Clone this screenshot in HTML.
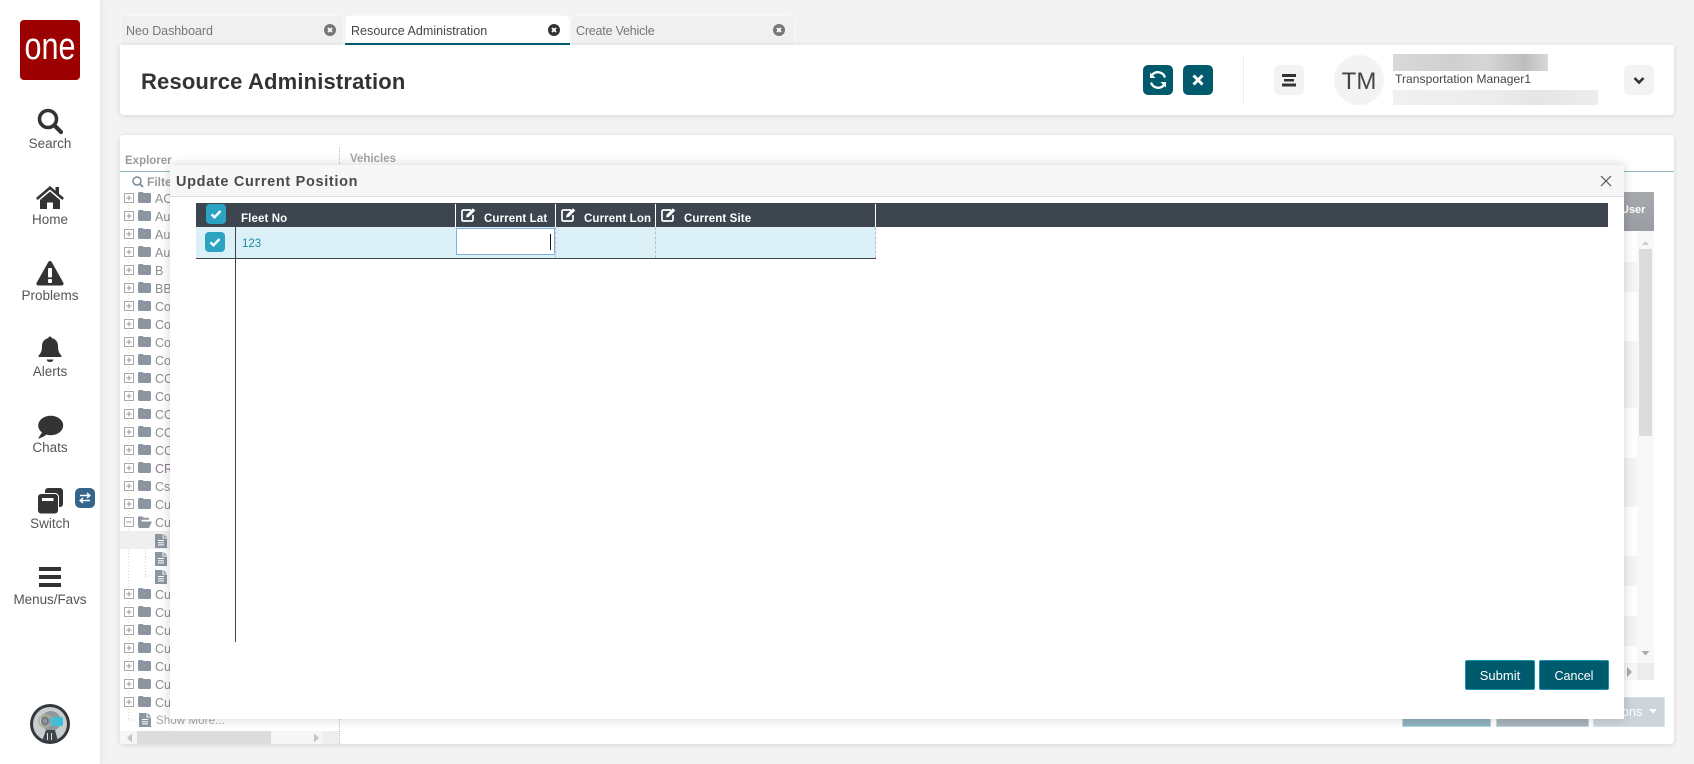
<!DOCTYPE html>
<html lang="en">
<head>
<meta charset="utf-8">
<title>Resource Administration</title>
<style>
html,body{margin:0;padding:0;width:1694px;height:764px;overflow:hidden;background:#f3f3f3;font-family:"Liberation Sans",sans-serif;color:#444}
*{box-sizing:border-box}
.a{position:absolute}
.t{position:absolute;white-space:nowrap;line-height:1}
.nav{position:absolute;left:0;width:100px;text-align:center;font-size:13.5px;color:#555;line-height:1;letter-spacing:0}
.tab{position:absolute;top:15px;height:30px;background:#f0f0f0;border-radius:5px 5px 0 0;border:1px solid #f8f8f8;border-bottom:0}
.tab span{position:absolute;left:6px;top:9px;font-size:12.5px;color:#777;white-space:nowrap;line-height:1;letter-spacing:0}
.x{position:absolute;top:8px;width:12px;height:12px;border-radius:50%;background:#777;color:#fff}
.x svg,.ib svg{display:block}
.ib{position:absolute;top:65px;width:30px;height:30px;border-radius:5px;background:#005a6e}
.gb{position:absolute;top:65px;width:30px;height:30px;border-radius:5px;background:#f3f3f3}
.bbtn{position:absolute;top:660px;width:70px;height:30px;background:#005a6e;border:1px solid #1c93ae;border-radius:2px;color:#fff;font-size:13px;text-align:center;line-height:29px}
.cb{position:absolute;width:20px;height:20px;border-radius:4px;background:#2ba4c4}
.th{position:absolute;top:214px;color:#fff;font-weight:bold;font-size:11.5px;line-height:1;white-space:nowrap;letter-spacing:.12px}
.vs{position:absolute;top:204px;width:1px;height:23px;background:#fff}
.ds{position:absolute;top:227px;width:0;height:31px;border-left:1px dashed #b5c3c9}
</style>
</head>
<body>
<svg width="0" height="0" style="position:absolute">
<defs>
<symbol id="pl" viewBox="0 0 10 10"><rect x=".5" y=".5" width="9" height="9" fill="#fff" stroke="#aaa"/><path d="M2.5 5h5M5 2.5v5" stroke="#999" fill="none"/></symbol>
<symbol id="mi" viewBox="0 0 10 10"><rect x=".5" y=".5" width="9" height="9" fill="#fff" stroke="#aaa"/><path d="M2.5 5h5" stroke="#999" fill="none"/></symbol>
<symbol id="fo" viewBox="0 0 13 11"><path d="M0 1.6C0 .7.6 0 1.4 0h2.8c.7 0 1 .4 1.3 1h6.1c.8 0 1.4.6 1.4 1.4v7.2c0 .8-.6 1.4-1.4 1.4H1.4C.6 11 0 10.400 0 9.600z" fill="#8b96a1"/></symbol>
<symbol id="dc" viewBox="0 0 12 14"><path d="M0 0h7.500v4.500H12V14H0z" fill="#8b96a1"/><path d="M8.500 0L12 3.500H8.500z" fill="#8b96a1"/><path d="M3 6.500h6M3 8.700h6M3 10.900h6" stroke="#fff" stroke-width="1"/></symbol>
<symbol id="chk" viewBox="0 0 20 20"><path d="M5.500 10.300l3 3 6-6.300" fill="none" stroke="#fff" stroke-width="2.400"/></symbol>
<symbol id="ed" viewBox="0 0 15 15"><path d="M10 3H2.500C1.600 3 1 3.600 1 4.500v8C1 13.400 1.600 14 2.500 14h8c.9 0 1.500-.6 1.500-1.500V8" fill="none" stroke="#fff" stroke-width="1.700"/><path d="M5 10.500l.6-2.800L12 1.200l2.300 2.300-6.400 6.400z" fill="#fff"/></symbol>
<symbol id="cx" viewBox="0 0 12 12"><path d="M4 4l4 4M8 4l-4 4" stroke="#fff" stroke-width="1.800"/></symbol>
<linearGradient id="vis" x1="0" x2="1" y1="0" y2="0"><stop offset="0" stop-color="#5fb7c8"/><stop offset="1" stop-color="#2fc0dc"/></linearGradient>
</defs>
</svg>

<!-- sidebar -->
<div class="a" style="left:0;top:0;width:100px;height:764px;background:#fff;box-shadow:2px 0 6px rgba(0,0,0,.06)"></div>
<svg class="a" style="left:20px;top:20px" width="60" height="60"><rect width="60" height="60" rx="4" fill="#9c0000"/><text x="30" y="39" text-anchor="middle" font-family="Liberation Sans" font-size="38" fill="#fff" textLength="51" lengthAdjust="spacingAndGlyphs">one</text></svg>

<svg class="a" style="left:36px;top:107px" width="28" height="28"><circle cx="12" cy="12" r="8.500" fill="none" stroke="#333" stroke-width="3.600"/><path d="M18.500 18.500l6.500 6.500" stroke="#333" stroke-width="4.200" stroke-linecap="round"/></svg>
<div class="nav" style="top:137px">Search</div>

<svg class="a" style="left:35px;top:184px" width="30" height="26"><path d="M15 2L1 14l1.700 2L15 5.500 27.300 16l1.700-2-5-4.300V3h-3.500v3.700z" fill="#333"/><path d="M15 7.500L5 16v9h7v-6.500h6V25h7v-9z" fill="#333"/></svg>
<div class="nav" style="top:213px">Home</div>

<svg class="a" style="left:35px;top:259px" width="30" height="28"><path d="M15 2c.8 0 1.400.4 1.800 1.100l11.500 20.500c.8 1.400-.1 2.900-1.700 2.900H3.400c-1.600 0-2.500-1.500-1.700-2.900L13.200 3.100C13.600 2.400 14.200 2 15 2z" fill="#333"/><rect x="13" y="9" width="4" height="9.500" rx="1" fill="#fff"/><rect x="13" y="20" width="4" height="4" rx="1" fill="#fff"/></svg>
<div class="nav" style="top:289px">Problems</div>

<svg class="a" style="left:37px;top:335px" width="26" height="28"><path d="M13 1.500c1 0 1.700.7 1.700 1.600 4 .8 6.300 4 6.300 8 0 6 1.800 7.700 3.400 9.400v1.500H1.600v-1.500C3.200 18.800 5 17.100 5 11.100c0-4 2.300-7.200 6.300-8 0-.9.700-1.600 1.700-1.600z" fill="#333"/><path d="M9.500 24.500h7c-.4 1.700-1.800 2.500-3.500 2.500s-3.100-.8-3.500-2.500z" fill="#333"/></svg>
<div class="nav" style="top:365px">Alerts</div>

<svg class="a" style="left:37px;top:415px" width="27" height="25"><ellipse cx="13.700" cy="10.500" rx="12.500" ry="9.800" fill="#333"/><path d="M6 16L1 23.500c3.500-.5 7-2.500 9-4.500z" fill="#333"/></svg>
<div class="nav" style="top:441px">Chats</div>

<svg class="a" style="left:37px;top:487px" width="27" height="28"><rect x="8" y="1" width="18" height="19" rx="3" fill="#333"/><rect x=".5" y="6.500" width="21" height="20.500" rx="3.500" fill="#333" stroke="#fff" stroke-width="1"/><rect x="5" y="11" width="11.500" height="3" fill="#fff"/></svg>
<div class="a" style="left:75px;top:488px;width:20px;height:20px;border-radius:5px;background:#35658a"></div>
<svg class="a" style="left:75px;top:488px" width="20" height="20"><path d="M5 7.500h9.500M12 5l2.800 2.500L12 10M15 12.500H5.500M8 10l-2.800 2.500L8 15" fill="none" stroke="#fff" stroke-width="1.500"/></svg>
<div class="nav" style="top:517px">Switch</div>

<div class="a" style="left:39px;top:567px;width:22px;height:4px;background:#333"></div>
<div class="a" style="left:39px;top:575px;width:22px;height:4px;background:#333"></div>
<div class="a" style="left:39px;top:583px;width:22px;height:4px;background:#333"></div>
<div class="nav" style="top:593px;letter-spacing:-.05px">Menus/Favs</div>

<svg class="a" style="left:30px;top:704px" width="40" height="40"><circle cx="20" cy="20" r="20" fill="#33393c"/><circle cx="20" cy="20" r="17" fill="#c9cdcf"/><circle cx="21" cy="17" r="10" fill="#8f989c"/><circle cx="15" cy="17" r="6" fill="none" stroke="#b8b196" stroke-width="1.500"/><circle cx="15" cy="17" r="3" fill="none" stroke="#6c7478" stroke-width="1.500"/><rect x="20" y="13" width="13" height="9" rx="2" fill="url(#vis)"/><path d="M12 37l4-11h9l3 11z" fill="#3f474b"/><path d="M17.500 29v7M21.500 29v7" stroke="#dde" stroke-width="1"/></svg>

<!-- tabs -->
<div class="tab" style="left:120px;width:224px"><span style="left:5px;letter-spacing:-.05px">Neo Dashboard</span><div class="x" style="left:203px"><svg width="12" height="12"><use href="#cx"/></svg></div></div>
<div class="tab" style="left:345px;width:225px;background:#fff"><span style="color:#444;left:5px;letter-spacing:.03px">Resource Administration</span><div class="x" style="left:202px;background:#333"><svg width="12" height="12"><use href="#cx"/></svg></div></div>
<div class="tab" style="left:570px;width:225px"><span style="left:5px;letter-spacing:-.2px">Create Vehicle</span><div class="x" style="left:202px"><svg width="12" height="12"><use href="#cx"/></svg></div></div>

<!-- header card -->
<div class="a" style="left:120px;top:45px;width:1554px;height:70px;background:#fff;border-radius:0 0 4px 4px;box-shadow:0 1px 6px rgba(0,0,0,.12)"></div>
<div class="t" style="left:141px;top:71px;font-size:22px;font-weight:bold;color:#333;letter-spacing:.16px">Resource Administration</div>
<div class="a" style="left:345px;top:43px;width:225px;height:2px;background:#005a6e"></div>

<div class="ib" style="left:1143px"><svg width="30" height="30"><path d="M22 12.500A7.500 7.500 0 0 0 9.300 9.700L7.700 11.500M8 17.500a7.500 7.500 0 0 0 12.700 2.800l1.600-1.800" fill="none" stroke="#fff" stroke-width="2.300"/><path d="M7 7.500v5.500h5.500zM23 22.500V17h-5.500z" fill="#fff"/></svg></div>
<div class="ib" style="left:1183px"><svg width="30" height="30"><path d="M10.500 10.500l9 9M19.500 10.500l-9 9" stroke="#fff" stroke-width="3"/></svg></div>
<div class="a" style="left:1243px;top:55px;width:1px;height:50px;background:#eee"></div>
<div class="gb" style="left:1274px"><svg width="30" height="30"><path d="M8 9h14v3H8zM10 14h10v2.500H10zM8 18.500h14v3H8z" fill="#333"/></svg></div>
<div class="a" style="left:1334px;top:55px;width:50px;height:50px;border-radius:50%;background:#f3f3f3"></div>
<div class="t" style="left:1334px;top:70px;width:50px;text-align:center;font-size:24px;color:#444">TM</div>
<div class="a" style="left:1393px;top:54px;width:155px;height:17px;background:linear-gradient(90deg,#d9d9d9,#cfcfcf 40%,#d6d6d6 60%,#bdbdbd 85%,#d8d8d8)"></div>
<div class="t" style="left:1395px;top:73px;font-size:12px;color:#444;letter-spacing:.08px">Transportation Manager1</div>
<div class="a" style="left:1393px;top:90px;width:205px;height:15px;background:linear-gradient(90deg,#f0f0f0,#ececec 50%,#e5e5e5 70%,#ededed)"></div>
<div class="gb" style="left:1624px"><svg width="30" height="30"><path d="M10.500 13l4.500 4.500 4.500-4.500" fill="none" stroke="#333" stroke-width="2.600"/></svg></div>

<!-- main card -->
<div class="a" style="left:120px;top:135px;width:1554px;height:609px;background:#fff;border-radius:4px;box-shadow:0 1px 6px rgba(0,0,0,.12)"></div>
<div class="t" style="left:125px;top:156px;font-size:11.500px;font-weight:bold;color:#9b9b9b;letter-spacing:0">Explorer</div>
<div class="t" style="left:350px;top:154px;font-size:11.500px;font-weight:bold;color:#a5a5a5;letter-spacing:0">Vehicles</div>
<div class="a" style="left:120px;top:171px;width:1554px;height:1px;background:#93b9bf"></div>
<div class="a" style="left:339px;top:147px;width:0;height:597px;border-left:1px dotted #bbb"></div>

<!-- tree -->
<svg class="a" style="left:120px;top:172px;font-family:'Liberation Sans',sans-serif" width="220" height="572">
<g fill="none" stroke="#d4d4d4" stroke-dasharray="1 2"><path d="M8.500 30V548M8.500 548H15M25.500 360V406M25.500 368H32M25.500 386H32M25.500 404H32"/></g>
<g font-size="12" fill="#999" font-weight="bold"><circle cx="17" cy="9" r="4" fill="none" stroke="#7a8a96" stroke-width="1.500"/><path d="M20 12l3 3" stroke="#7a8a96" stroke-width="1.800"/><text x="27" y="14">Filter</text></g>
<rect y="359" width="50" height="18" fill="#efefef"/>
<g>
<use href="#pl" x="4" y="21" width="10" height="10"/><use href="#fo" x="18" y="20" width="13" height="11"/>
<use href="#pl" x="4" y="39" width="10" height="10"/><use href="#fo" x="18" y="38" width="13" height="11"/>
<use href="#pl" x="4" y="57" width="10" height="10"/><use href="#fo" x="18" y="56" width="13" height="11"/>
<use href="#pl" x="4" y="75" width="10" height="10"/><use href="#fo" x="18" y="74" width="13" height="11"/>
<use href="#pl" x="4" y="93" width="10" height="10"/><use href="#fo" x="18" y="92" width="13" height="11"/>
<use href="#pl" x="4" y="111" width="10" height="10"/><use href="#fo" x="18" y="110" width="13" height="11"/>
<use href="#pl" x="4" y="129" width="10" height="10"/><use href="#fo" x="18" y="128" width="13" height="11"/>
<use href="#pl" x="4" y="147" width="10" height="10"/><use href="#fo" x="18" y="146" width="13" height="11"/>
<use href="#pl" x="4" y="165" width="10" height="10"/><use href="#fo" x="18" y="164" width="13" height="11"/>
<use href="#pl" x="4" y="183" width="10" height="10"/><use href="#fo" x="18" y="182" width="13" height="11"/>
<use href="#pl" x="4" y="201" width="10" height="10"/><use href="#fo" x="18" y="200" width="13" height="11"/>
<use href="#pl" x="4" y="219" width="10" height="10"/><use href="#fo" x="18" y="218" width="13" height="11"/>
<use href="#pl" x="4" y="237" width="10" height="10"/><use href="#fo" x="18" y="236" width="13" height="11"/>
<use href="#pl" x="4" y="255" width="10" height="10"/><use href="#fo" x="18" y="254" width="13" height="11"/>
<use href="#pl" x="4" y="273" width="10" height="10"/><use href="#fo" x="18" y="272" width="13" height="11"/>
<use href="#pl" x="4" y="291" width="10" height="10"/><use href="#fo" x="18" y="290" width="13" height="11"/>
<use href="#pl" x="4" y="309" width="10" height="10"/><use href="#fo" x="18" y="308" width="13" height="11"/>
<use href="#pl" x="4" y="327" width="10" height="10"/><use href="#fo" x="18" y="326" width="13" height="11"/>
<use href="#mi" x="4" y="345" width="10" height="10"/>
<path d="M18 344.500h4.500l1.300 1.300h5.200v2H22l-2.500 7h-1.500zM21 349.500h11l-3 6.500H18.500z" fill="#8b96a1"/>
<use href="#dc" x="35" y="362" width="12" height="14"/>
<use href="#dc" x="35" y="380" width="12" height="14"/>
<use href="#dc" x="35" y="398" width="12" height="14"/>
<use href="#pl" x="4" y="417" width="10" height="10"/><use href="#fo" x="18" y="416" width="13" height="11"/>
<use href="#pl" x="4" y="435" width="10" height="10"/><use href="#fo" x="18" y="434" width="13" height="11"/>
<use href="#pl" x="4" y="453" width="10" height="10"/><use href="#fo" x="18" y="452" width="13" height="11"/>
<use href="#pl" x="4" y="471" width="10" height="10"/><use href="#fo" x="18" y="470" width="13" height="11"/>
<use href="#pl" x="4" y="489" width="10" height="10"/><use href="#fo" x="18" y="488" width="13" height="11"/>
<use href="#pl" x="4" y="507" width="10" height="10"/><use href="#fo" x="18" y="506" width="13" height="11"/>
<use href="#pl" x="4" y="525" width="10" height="10"/><use href="#fo" x="18" y="524" width="13" height="11"/>
<use href="#dc" x="19" y="541" width="12" height="14"/>
</g>
<g font-size="12.500" fill="#8e8e8e">
<text x="35" y="31">AOI</text><text x="35" y="49">Aus</text><text x="35" y="67">Aut</text><text x="35" y="85">Aut</text><text x="35" y="103">B</text><text x="35" y="121">BBI</text>
<text x="35" y="139">Col</text><text x="35" y="157">Col</text><text x="35" y="175">Col</text><text x="35" y="193">Col</text><text x="35" y="211">COI</text><text x="35" y="229">Coo</text>
<text x="35" y="247">COI</text><text x="35" y="265">COI</text><text x="35" y="283">COI</text><text x="35" y="301" fill="#8a7a90">CRI</text><text x="35" y="319">Cst</text><text x="35" y="337">Cus</text><text x="35" y="355">Cus</text>
<text x="35" y="427">Cus</text><text x="35" y="445">Cus</text><text x="35" y="463">Cus</text><text x="35" y="481">Cus</text><text x="35" y="499">Cus</text><text x="35" y="517">Cus</text><text x="35" y="535">Cus</text>
<text x="36" y="552" fill="#a5a5a5" font-size="11.500" letter-spacing=".1">Show More...</text>
</g>
<rect y="559" width="219" height="13" fill="#f6f6f6"/>
<rect x="17" y="559" width="134" height="13" fill="#dcdcdc"/>
<rect x="202" y="559" width="17" height="13" fill="#eee"/>
<path d="M12 561.500l-5 4.500 5 4.500zM194 561.500l5 4.500-5 4.500z" fill="#c4c4c4"/>
</svg>

<!-- right remnants behind modal -->
<div class="a" style="left:1600px;top:192px;width:54px;height:39px;background:linear-gradient(#a6a8ac,#9a9ea3)"></div>
<div class="t" style="left:1621px;top:205px;font-size:11px;font-weight:bold;color:#fff">User</div>
<div class="a" style="left:1637px;top:231px;width:17px;height:432px;background:#f8f8f8"></div>
<div class="a" style="left:1639px;top:249px;width:13px;height:187px;background:#dcdcdc"></div>
<svg class="a" style="left:1637px;top:231px" width="17" height="432"><path d="M5 14l3.500-4 3.500 4z" fill="#ccc"/><path d="M4.500 420h8l-4 4.500z" fill="#aaa"/></svg>
<div class="a" style="left:1600px;top:262px;width:37px;height:30px;background:#f4f4f4"></div>
<div class="a" style="left:1600px;top:341px;width:37px;height:67px;background:#f4f4f4"></div>
<div class="a" style="left:1600px;top:458px;width:37px;height:49px;background:#f4f4f4"></div>
<div class="a" style="left:1600px;top:556px;width:37px;height:30px;background:#f4f4f4"></div>
<div class="a" style="left:1600px;top:616px;width:37px;height:30px;background:#f4f4f4"></div>
<div class="a" style="left:1600px;top:663px;width:37px;height:17px;background:#f6f6f6"></div>
<div class="a" style="left:1637px;top:663px;width:17px;height:17px;background:#ececec"></div>
<svg class="a" style="left:1626px;top:666px" width="10" height="12"><path d="M1 1l5 5-5 5z" fill="#aaa"/></svg>
<div class="a" style="left:1402px;top:697px;width:89px;height:30px;background:#8fb3bc;border:1px solid #b5dbe5"></div>
<div class="a" style="left:1496px;top:697px;width:93px;height:30px;background:#a8b2bc;border:1px solid #bddce5"></div>
<div class="a" style="left:1593px;top:697px;width:72px;height:30px;background:#cdd4da;border:1px solid #cfe7ee"></div>
<div class="t" style="left:1600px;top:705px;font-size:13px;color:#fff">Actions</div>
<svg class="a" style="left:1648px;top:708px" width="12" height="8"><path d="M1 1h8L5 5.500z" fill="#fff"/></svg>

<!-- modal -->
<div class="a" style="left:170px;top:165px;width:1454px;height:554px;background:#fff;box-shadow:0 0 10px rgba(0,0,0,.18)"></div>
<div class="a" style="left:170px;top:165px;width:1454px;height:32px;background:#f7f7f7;border-bottom:1px solid #ddd"></div>
<div class="t" style="left:176px;top:175px;font-size:14.500px;font-weight:bold;color:#4a4a4a;letter-spacing:.67px">Update Current Position</div>
<svg class="a" style="left:1600px;top:175px" width="12" height="12"><path d="M1 1l10 10M11 1L1 11" stroke="#555" stroke-width="1.200"/></svg>

<div class="a" style="left:196px;top:203px;width:1412px;height:24px;background:#3d454e"></div>
<div class="a" style="left:196px;top:227px;width:680px;height:31px;background:#dcf0f8"></div>
<div class="a" style="left:196px;top:258px;width:680px;height:1px;background:#3d454e"></div>
<div class="a" style="left:235px;top:203px;width:1px;height:439px;background:#3d454e"></div>
<div class="vs" style="left:455px"></div><div class="vs" style="left:555px"></div><div class="vs" style="left:655px"></div><div class="vs" style="left:875px"></div>
<div class="ds" style="left:555px"></div><div class="ds" style="left:655px"></div><div class="ds" style="left:875px"></div>
<div class="a" style="left:456px;top:228px;width:99px;height:27px;background:#fff;border:1px solid #7fb0e0"></div>
<div class="a" style="left:550px;top:234px;width:1px;height:16px;background:#111"></div>

<div class="cb" style="left:206px;top:204px"><svg width="20" height="20"><use href="#chk"/></svg></div>
<div class="cb" style="left:205px;top:232px"><svg width="20" height="20"><use href="#chk"/></svg></div>
<div class="th" style="left:241px">Fleet No</div>
<div class="t" style="left:242px;top:239px;font-size:11.500px;color:#1f8aa5">123</div>
<svg class="a" style="left:461px;top:207px" width="15" height="15"><use href="#ed"/></svg>
<div class="th" style="left:484px">Current Lat</div>
<svg class="a" style="left:561px;top:207px" width="15" height="15"><use href="#ed"/></svg>
<div class="th" style="left:584px">Current Lon</div>
<svg class="a" style="left:661px;top:207px" width="15" height="15"><use href="#ed"/></svg>
<div class="th" style="left:684px">Current Site</div>

<div class="bbtn" style="left:1465px">Submit</div>
<div class="bbtn" style="left:1539px;font-size:12.500px;line-height:30px">Cancel</div>
</body>
</html>
